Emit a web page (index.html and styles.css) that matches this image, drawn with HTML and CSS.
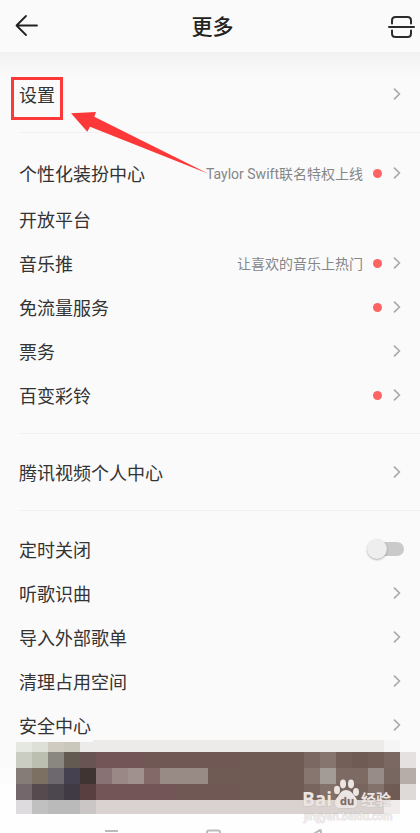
FILE: index.html
```
<!DOCTYPE html>
<html lang="zh-CN">
<head>
    <meta charset="UTF-8">
    <meta name="viewport" content="width=device-width, initial-scale=1.0">
    <title>更多</title>
    <link rel="stylesheet" href="styles.css">
</head>
<body>
    <!-- 公用箭头 -->
    <svg class="defs" aria-hidden="true">
        <symbol id="chevron" viewBox="0 0 8 12">
            <path d="M1.500 1.200L6.500 6L1.500 10.800" fill="none" stroke="#a9a9a9" stroke-width="1.700" stroke-linecap="round" stroke-linejoin="round"/>
        </symbol>
    </svg>

    <header class="header">
        <button class="icon-btn" type="button" aria-label="返回">
            <svg width="24" height="24" viewBox="0 0 24 24" fill="none" stroke="#222" stroke-width="1.800" stroke-linecap="round" stroke-linejoin="round">
                <path d="M23 11.500H2.500M12 2L2.500 11.500L12 21"/>
            </svg>
        </button>
        <h1 class="title">更多</h1>
        <button class="icon-btn" type="button" aria-label="扫一扫">
            <svg width="28" height="24" viewBox="0 0 28 24" fill="none" stroke="#2b2b2b" stroke-width="2" stroke-linecap="round">
                <path d="M2 13H27"/>
                <path d="M5 9.500V6.500Q5 3 8.500 3H20.500Q24 3 24 6.500V9.500"/>
                <path d="M5 16.500V19.500Q5 23 8.500 23H20.500Q24 23 24 19.500V16.500"/>
            </svg>
        </button>
    </header>

    <main class="menu">
        <nav class="group group-first">
            <a class="row" href="#"><span class="label marked">设置</span><svg class="chevron"><use href="#chevron"/></svg></a>
        </nav>

        <nav class="group">
            <a class="row row-tall" href="#"><span class="label">个性化装扮中心</span><span class="note">Taylor Swift联名特权上线</span><span class="dot"></span><svg class="chevron"><use href="#chevron"/></svg></a>
            <a class="row" href="#"><span class="label">开放平台</span></a>
            <a class="row" href="#"><span class="label">音乐推</span><span class="note">让喜欢的音乐上热门</span><span class="dot"></span><svg class="chevron"><use href="#chevron"/></svg></a>
            <a class="row" href="#"><span class="label">免流量服务</span><span class="dot"></span><svg class="chevron"><use href="#chevron"/></svg></a>
            <a class="row" href="#"><span class="label">票务</span><svg class="chevron"><use href="#chevron"/></svg></a>
            <a class="row" href="#"><span class="label">百变彩铃</span><span class="dot"></span><svg class="chevron"><use href="#chevron"/></svg></a>
        </nav>

        <nav class="group">
            <a class="row" href="#"><span class="label">腾讯视频个人中心</span><svg class="chevron"><use href="#chevron"/></svg></a>
        </nav>

        <nav class="group group-last">
            <label class="row" for="timer"><span class="label">定时关闭</span><input class="switch" id="timer" type="checkbox"></label>
            <a class="row" href="#"><span class="label">听歌识曲</span><svg class="chevron"><use href="#chevron"/></svg></a>
            <a class="row" href="#"><span class="label">导入外部歌单</span><svg class="chevron"><use href="#chevron"/></svg></a>
            <a class="row" href="#"><span class="label">清理占用空间</span><svg class="chevron"><use href="#chevron"/></svg></a>
            <a class="row" href="#"><span class="label">安全中心</span><svg class="chevron"><use href="#chevron"/></svg></a>
        </nav>

        <!-- 指向设置的红色箭头 -->
        <svg class="pointer" width="140" height="64" viewBox="0 0 140 64" aria-hidden="true">
            <path d="M1 1.300L26 0L24.300 4.700L139 62L20 14.700L17.300 19.700Z" fill="#fd3838"/>
        </svg>
    </main>

    <footer class="footer">
        <svg class="mosaic" viewBox="0 0 420 93" shape-rendering="crispEdges">
            <path d="M0 28H420V44H0Z" fill="#fcfcfc"/>
            <path d="M0 44H420V93H0Z" fill="#fefefe"/>
            <path d="M80 2H93V0H384V12H80Z" fill="#ecebea"/>
            <path d="M384 0H400V12H384Z" fill="#f5f5f5"/>
            <path d="M16 2H32V12H16Z" fill="#e4e8e0"/>
            <path d="M32 2H48V12H32Z" fill="#dde0d6"/>
            <path d="M48 2H64V12H48Z" fill="#d0cbc0"/>
            <path d="M64 2H80V12H64Z" fill="#cac8bd"/>

            <path d="M96 12H400V60H96Z" fill="#6f5b53"/>
            <path d="M96 12H144V28H96ZM96 44H176V60H96Z" fill="#735558"/>
            <path d="M144 12H240V28H144ZM176 44H240V60H176Z" fill="#705854"/>
            <path d="M16 12H32V28H16Z" fill="#c9cdc2"/>
            <path d="M32 12H48V28H32Z" fill="#bbbfb0"/>
            <path d="M48 12H64V28H48Z" fill="#8a8780"/>
            <path d="M64 12H80V28H64Z" fill="#635b52"/>
            <path d="M80 12H96V28H80Z" fill="#685452"/>
            <path d="M304 12H320V28H304ZM384 12H400V28H384Z" fill="#7b6862"/>
            <path d="M320 12H336V28H320Z" fill="#86756f"/>
            <path d="M336 12H352V28H336ZM368 12H384V28H368Z" fill="#745f58"/>
            <path d="M400 12H416V28H400Z" fill="#e4e1e0"/>

            <path d="M16 28H32V44H16Z" fill="#857c77"/>
            <path d="M32 28H48V44H32Z" fill="#7b7061"/>
            <path d="M48 28H64V44H48Z" fill="#6c686d"/>
            <path d="M64 28H80V44H64Z" fill="#464150"/>
            <path d="M80 28H96V44H80Z" fill="#403432"/>
            <path d="M96 28H112V44H96Z" fill="#887273"/>
            <path d="M112 28H128V44H112Z" fill="#998885"/>
            <path d="M128 28H144V44H128Z" fill="#a0908e"/>
            <path d="M144 28H160V44H144Z" fill="#836a69"/>
            <path d="M160 28H208V44H160Z" fill="#988a85"/>
            <path d="M304 28H320V44H304Z" fill="#87766f"/>
            <path d="M320 28H336V44H320Z" fill="#a39b95"/>
            <path d="M336 28H368V44H336Z" fill="#7d6a63"/>
            <path d="M368 28H384V44H368Z" fill="#988c88"/>
            <path d="M384 28H400V44H384Z" fill="#786660"/>
            <path d="M400 28H416V44H400Z" fill="#b6aca8"/>

            <path d="M16 44H32V60H16Z" fill="#73676c"/>
            <path d="M32 44H48V60H32Z" fill="#564a4f"/>
            <path d="M48 44H64V60H48Z" fill="#4c464f"/>
            <path d="M64 44H80V60H64Z" fill="#3f3a43"/>
            <path d="M80 44H96V60H80Z" fill="#593f3f"/>
            <path d="M304 44H320V60H304ZM336 44H368V60H336Z" fill="#78655d"/>
            <path d="M320 44H336V60H320ZM368 44H384V60H368Z" fill="#83716b"/>
            <path d="M400 44H416V60H400Z" fill="#dddad8"/>

            <path d="M16 60H32V74H16Z" fill="#dddbdd"/>
            <path d="M32 60H48V74H32Z" fill="#c1c0c1"/>
            <path d="M48 60H80V74H48Z" fill="#bababb"/>
            <path d="M80 60H96V74H80Z" fill="#cbc6c6"/>
            <path d="M96 60H384V74H96Z" fill="#d9d2d0"/>
            <path d="M384 60H400V74H384Z" fill="#f0ecec"/>

            <!-- 水印 -->
            <g class="watermark" shape-rendering="auto">
                <text class="wm-name" x="302" y="66">Bai</text>
                <ellipse cx="337" cy="50" rx="3" ry="4.200"/>
                <ellipse cx="343" cy="44" rx="3" ry="4.400"/>
                <ellipse cx="351" cy="44" rx="3" ry="4.400"/>
                <ellipse cx="356" cy="52" rx="3" ry="4"/>
                <path d="M346 50C351 50 353 54 356 58C360 64 356 69 351 68H341C336 69 333 64 336 59C340 54 341 50 346 50Z"/>
                <text class="wm-du" x="340" y="65">du</text>
                <text class="wm-cn" x="361" y="65">经验</text>
                <text class="wm-url" x="304" y="80">jingyan.baidu.com</text>
            </g>

            <!-- 系统导航键 -->
            <g class="keys" shape-rendering="auto">
                <path d="M105 91H118"/>
                <path d="M207 95V92Q207 90.500 209 90.500H218Q220 90.500 220 92V95"/>
                <path d="M312 95L320 90Q321 90 321 91V95"/>
            </g>
        </svg>
    </footer>
</body>
</html>
```
FILE: styles.css
```
* {
    box-sizing: border-box;
}

body {
    margin: 0;
    background-color: #fafafa;
    color: #333;
    font-family: Roboto, "Noto Sans CJK SC", sans-serif;
    font-size: 18px;
}

.defs {
    display: none;
}

.header {
    display: flex;
    justify-content: space-between;
    align-items: center;
    height: 52px;
    padding: 0 5px 0 14px;
}

.icon-btn {
    display: flex;
    padding: 0;
    border: none;
    background: none;
    cursor: pointer;
}

.title {
    margin: 0;
    padding-top: 2px;
    font-size: 21px;
    line-height: 32px;
    font-weight: 500;
    color: #222;
}

.menu {
    position: relative;
    background: linear-gradient(#f1f1f1, #fafafa 24px);
}

.group {
    padding: 16px 0;
    margin-left: 19px;
    border-bottom: 1px solid #f1f1f1;
}

.group-first {
    padding-top: 20px;
}

.group-last {
    padding-bottom: 0;
    border-bottom: none;
}

.row {
    display: flex;
    align-items: center;
    height: 44px;
    padding-right: 19px;
    color: inherit;
    text-decoration: none;
    cursor: pointer;
}

.row-tall {
    height: 48px;
}

.label {
    position: relative;
    margin-right: auto;
    padding-top: 4px;
    line-height: 26px;
}

/* 红框标注 */
.marked::after {
    content: "";
    position: absolute;
    top: -2px;
    bottom: -11px;
    left: -8px;
    right: -8px;
    border: 3px solid #fd3838;
}

.note {
    margin-right: 10px;
    font-size: 14px;
    color: #868686;
}

.dot {
    width: 9px;
    height: 9px;
    margin-right: 11px;
    border-radius: 50%;
    background-color: #ff6464;
}

.chevron {
    width: 8px;
    height: 12px;
}

.switch {
    appearance: none;
    display: flex;
    align-items: center;
    width: 32px;
    height: 14px;
    margin: 0 -3px 0 0;
    border-radius: 7px;
    background-color: #cacaca;
    cursor: pointer;
}

.switch::before {
    content: "";
    flex: none;
    width: 20px;
    height: 20px;
    margin-left: -5px;
    border-radius: 50%;
    background-color: #eee;
    box-shadow: 0 1px 2px rgba(0, 0, 0, 0.3);
}

.switch:checked::before {
    margin-left: 17px;
}

.pointer {
    position: absolute;
    top: 60px;
    left: 70px;
    pointer-events: none;
}

/* 底部盖住最后一行的下沿 */
.footer {
    position: relative;
    margin-top: -7px;
    pointer-events: none;
}

.mosaic {
    display: block;
    width: 100%;
}

.watermark {
    fill: #ebe6e4;
    stroke: rgba(120, 105, 100, 0.2);
    stroke-width: 1px;
    paint-order: stroke;
    font-family: "Open Sans", "Noto Sans CJK SC", sans-serif;
    font-weight: 700;
}

.wm-name {
    font-size: 19px;
}

.wm-du {
    font-size: 11px;
    fill: #7d6a63;
}

.wm-cn {
    font-size: 15px;
}

.wm-url {
    font-size: 10px;
    font-weight: 600;
    fill: #eeebeb;
}

.keys {
    fill: none;
    stroke: #bbb;
    stroke-width: 2;
}
```
